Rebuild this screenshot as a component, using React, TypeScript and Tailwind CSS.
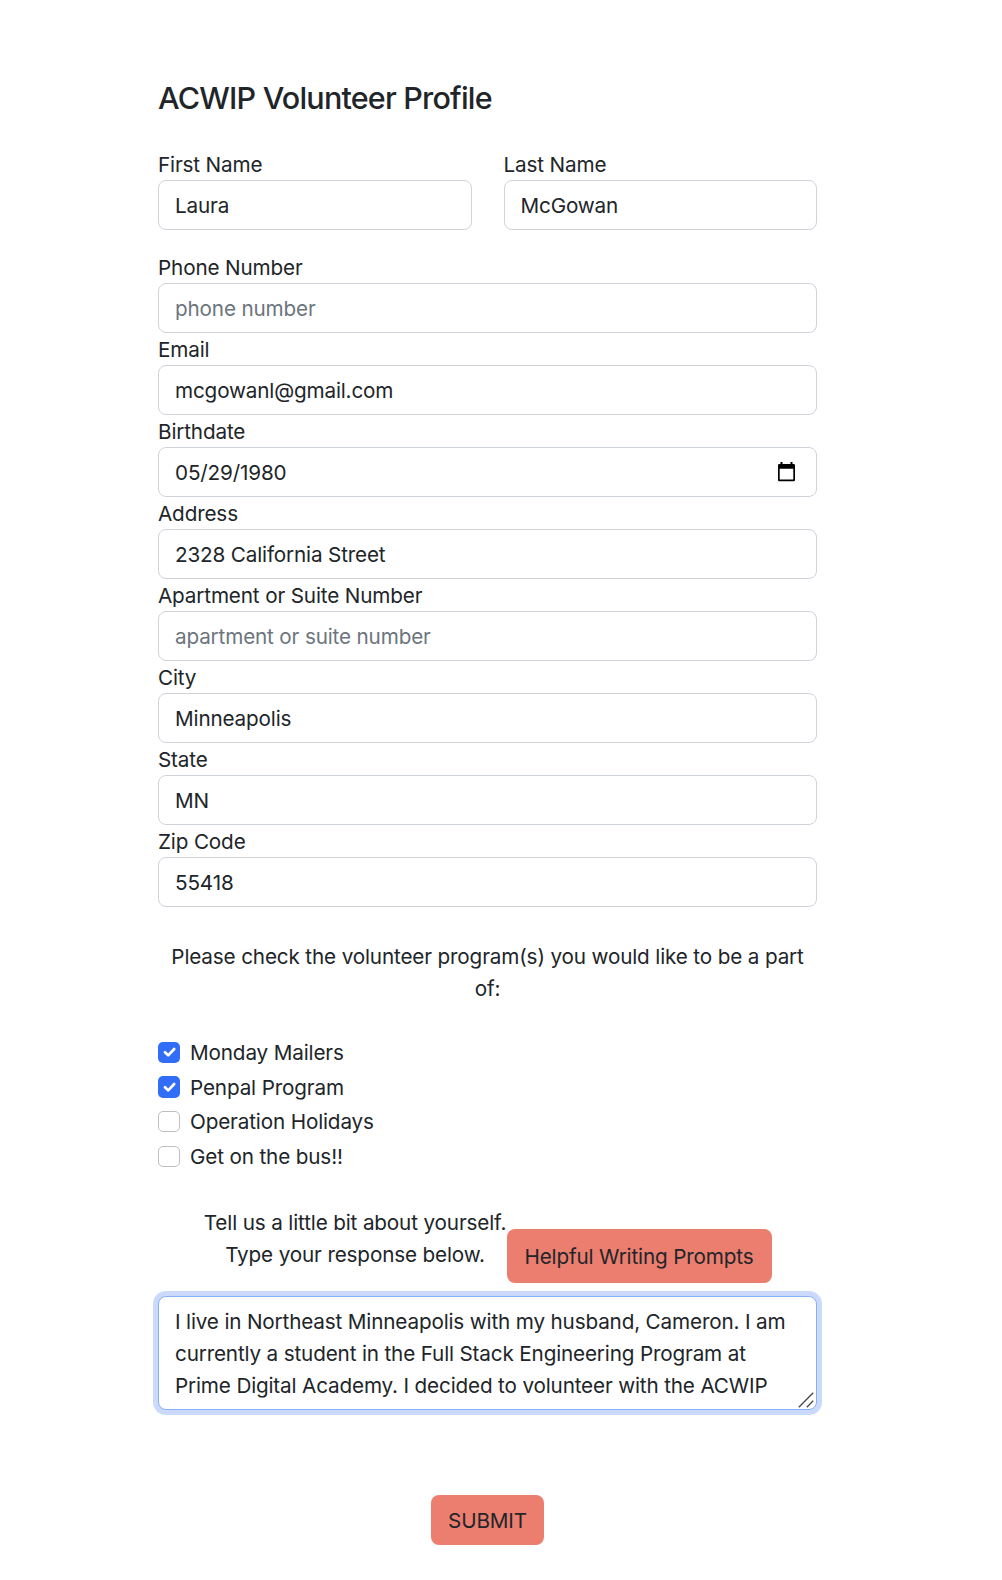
import React from "react";

const inputClass =
  "block h-[50px] w-full rounded-[8px] border border-[#ced4da] bg-white pl-4 pr-4 pt-px pb-0 text-[#212529] placeholder:text-[#6c757d] placeholder:opacity-100 outline-none tracking-[-0.16px]";

type FieldProps = { label: string; value?: string; placeholder?: string; calendar?: boolean };

function CalendarIcon() {
  return (
    <svg width="18" height="20" viewBox="0 0 18 20" className="absolute right-[21px] top-[15px]" aria-hidden="true">
      <path fill="#000" d="M2.500 0h2v2h8V0h2v2h1.200A1.300 1.300 0 0 1 17 3.300V18a1.300 1.300 0 0 1-1.300 1.300H1.300A1.300 1.300 0 0 1 0 18V3.300A1.300 1.300 0 0 1 1.300 2H2.500zM1.700 6.800v10.700h13.600V6.800z" />
    </svg>
  );
}

function Field({ label, value, placeholder, calendar }: FieldProps) {
  return (
    <label className="block">
      <span className="block h-8 pt-px leading-8">{label}</span>
      <span className="relative block">
        <input className={inputClass} defaultValue={value} placeholder={placeholder} />
        {calendar && <CalendarIcon />}
      </span>
    </label>
  );
}

const fields: FieldProps[] = [
  { label: "Phone Number", placeholder: "phone number" },
  { label: "Email", value: "mcgowanl@gmail.com" },
  { label: "Birthdate", value: "05/29/1980", calendar: true },
  { label: "Address", value: "2328 California Street" },
  { label: "Apartment or Suite Number", placeholder: "apartment or suite number" },
  { label: "City", value: "Minneapolis" },
  { label: "State", value: "MN" },
  { label: "Zip Code", value: "55418" },
];

const programs = [
  { name: "Monday Mailers", checked: true },
  { name: "Penpal Program", checked: true },
  { name: "Operation Holidays", checked: false },
  { name: "Get on the bus!!", checked: false },
];

function Checkbox({ checked }: { checked: boolean }) {
  return checked ? (
    <span className="flex h-[21.5px] w-[22px] items-center justify-center rounded-[5px] bg-[#316df6]">
      <svg width="22" height="22" viewBox="0 0 22 22" fill="none" aria-hidden="true">
        <path d="m7 11.200 3.200 3.200 6-6.400" stroke="#fff" strokeWidth="2.700" strokeLinecap="round" strokeLinejoin="round" />
      </svg>
    </span>
  ) : (
    <span className="block h-[21.5px] w-[22px] rounded-[5px] border border-[#bfbfbf] bg-white" />
  );
}

const bio =
  "I live in Northeast Minneapolis with my husband, Cameron. I am\ncurrently a student in the Full Stack Engineering Program at\nPrime Digital Academy. I decided to volunteer with the ACWIP";

export default function App() {
  return (
    <main className="h-[1580px] w-[1002px] overflow-hidden bg-white font-['Inter',sans-serif] text-[20.7px] tracking-[-0.15px] text-[#212529]">
      <form className="ml-[158px] flex w-[659px] flex-col pt-[78px]">
        <h1 className="h-[70px] whitespace-nowrap text-[30.5px] font-medium leading-10 tracking-[-0.8px]">ACWIP Volunteer Profile</h1>
        <div className="grid grid-cols-2 gap-8">
          <Field label="First Name" value="Laura" />
          <Field label="Last Name" value="McGowan" />
        </div>
        <div className="mt-[21px]">
          {fields.map((f) => (
            <Field key={f.label} {...f} />
          ))}
        </div>

        <p className="mt-[34px] text-center leading-8">
          <span className="whitespace-nowrap">Please check the volunteer program(s) you would like to be a part</span>
          <br />
          of:
        </p>

        <ul className="mt-[30px]">
          {programs.map((p) => (
            <li key={p.name} className="flex h-[34.700px] items-center gap-[10px]">
              <Checkbox checked={p.checked} />
              <span className="pt-[0.5px]">{p.name}</span>
            </li>
          ))}
        </ul>

        <div className="mt-[33px] flex h-[89px] justify-center">
          <p className="w-[303px] whitespace-nowrap text-center leading-8">
            Tell us a little bit about yourself.
            <br />
            Type your response below.
          </p>
          <button type="button" className="mt-[22px] h-[54px] w-[265px] rounded-[8px] bg-[#ec7e70] pt-[2px]">
            Helpful Writing Prompts
          </button>
        </div>

        <div className="relative">
          <textarea
            className="block h-[114px] w-full resize-none overflow-hidden whitespace-pre rounded-[8px] border border-[#86b0fb] bg-white px-4 pb-[7px] pt-[9px] leading-8 tracking-[-0.16px] shadow-[0_0_0_5px_#cbdafc] outline-none"
            defaultValue={bio}
          />
          <svg width="16" height="16" viewBox="0 0 16 16" className="absolute bottom-[2px] right-[3px]" stroke="#444" strokeWidth="1.300" aria-hidden="true">
            <path d="M.800 15.200 15.200.800M8.800 15.200l6.400-6.400" />
          </svg>
        </div>

        <button type="button" className="mt-[85px] h-[50px] w-[113px] self-center rounded-[8px] bg-[#ec7e70] pt-[2px]">
          SUBMIT
        </button>
      </form>
    </main>
  );
}
